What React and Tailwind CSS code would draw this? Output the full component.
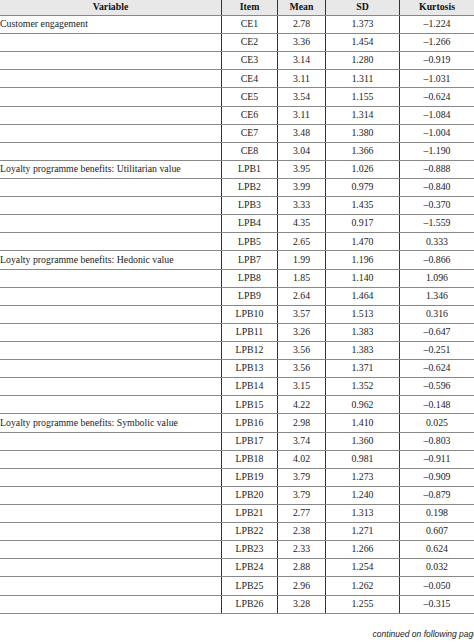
const rows = [
  ['Customer engagement', 'CE1', '2.78', '1.373', '–1.224'],
  ['', 'CE2', '3.36', '1.454', '–1.266'],
  ['', 'CE3', '3.14', '1.280', '–0.919'],
  ['', 'CE4', '3.11', '1.311', '–1.031'],
  ['', 'CE5', '3.54', '1.155', '–0.624'],
  ['', 'CE6', '3.11', '1.314', '–1.084'],
  ['', 'CE7', '3.48', '1.380', '–1.004'],
  ['', 'CE8', '3.04', '1.366', '–1.190'],
  ['Loyalty programme benefits: Utilitarian value', 'LPB1', '3.95', '1.026', '–0.888'],
  ['', 'LPB2', '3.99', '0.979', '–0.840'],
  ['', 'LPB3', '3.33', '1.435', '–0.370'],
  ['', 'LPB4', '4.35', '0.917', '–1.559'],
  ['', 'LPB5', '2.65', '1.470', '0.333'],
  ['Loyalty programme benefits: Hedonic value', 'LPB7', '1.99', '1.196', '–0.866'],
  ['', 'LPB8', '1.85', '1.140', '1.096'],
  ['', 'LPB9', '2.64', '1.464', '1.346'],
  ['', 'LPB10', '3.57', '1.513', '0.316'],
  ['', 'LPB11', '3.26', '1.383', '–0.647'],
  ['', 'LPB12', '3.56', '1.383', '–0.251'],
  ['', 'LPB13', '3.56', '1.371', '–0.624'],
  ['', 'LPB14', '3.15', '1.352', '–0.596'],
  ['', 'LPB15', '4.22', '0.962', '–0.148'],
  ['Loyalty programme benefits: Symbolic value', 'LPB16', '2.98', '1.410', '0.025'],
  ['', 'LPB17', '3.74', '1.360', '–0.803'],
  ['', 'LPB18', '4.02', '0.981', '–0.911'],
  ['', 'LPB19', '3.79', '1.273', '–0.909'],
  ['', 'LPB20', '3.79', '1.240', '–0.879'],
  ['', 'LPB21', '2.77', '1.313', '0.198'],
  ['', 'LPB22', '2.38', '1.271', '0.607'],
  ['', 'LPB23', '2.33', '1.266', '0.624'],
  ['', 'LPB24', '2.88', '1.254', '0.032'],
  ['', 'LPB25', '2.96', '1.262', '–0.050'],
  ['', 'LPB26', '3.28', '1.255', '–0.315'],
]

const cols = 'grid grid-cols-[221px_56px_48px_74px_75px]'
const cell = 'flex items-center justify-center border-l border-[#333]'

export default function App() {
  return (
    <div className="h-[642px] w-[474px] overflow-hidden bg-white font-['Liberation_Serif',serif] text-[9.8px] text-[#222]">
      <div className={`${cols} h-[16px] border-b border-[#888] bg-[#e8e8e8] font-bold text-[#111]`}>
        <div className="flex items-center justify-center">Variable</div>
        <div className={cell}>Item</div>
        <div className={cell}>Mean</div>
        <div className={cell}>SD</div>
        <div className={cell}>Kurtosis</div>
      </div>
      {rows.map((r) => (
        <div key={r[1]} className={`${cols} h-[18.12px] border-b border-[#888]`}>
          <div className="flex items-center whitespace-nowrap">{r[0]}</div>
          <div className={cell}>{r[1]}</div>
          <div className={cell}>{r[2]}</div>
          <div className={cell}>{r[3]}</div>
          <div className={cell}>{r[4]}</div>
        </div>
      ))}
      <div className="mt-[14px] -mr-[4px] text-right font-['Liberation_Sans',sans-serif] text-[8.5px] italic text-[#222]">
        continued on following page
      </div>
    </div>
  )
}
